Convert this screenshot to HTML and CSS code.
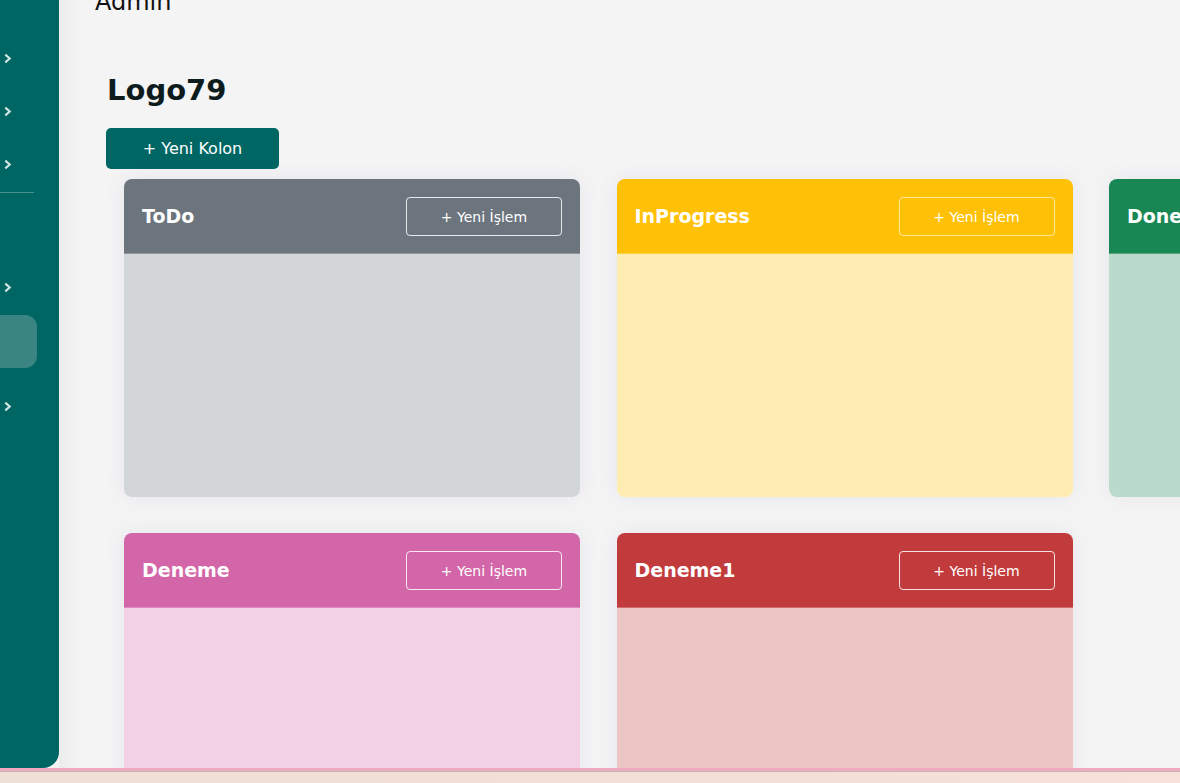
FILE: index.html
```html
<!DOCTYPE html>
<html lang="tr">
<head>
<meta charset="utf-8">
<title>Logo79</title>
<link rel="stylesheet" href="styles.css">
</head>
<body>
<div class="app">
  <aside class="sidebar">
    <div class="nav-item"><svg class="chev" viewBox="0 0 8 10"><path d="M2 1.5 L6 5 L2 8.5"/></svg></div>
    <div class="nav-item"><svg class="chev" viewBox="0 0 8 10"><path d="M2 1.5 L6 5 L2 8.5"/></svg></div>
    <div class="nav-item"><svg class="chev" viewBox="0 0 8 10"><path d="M2 1.5 L6 5 L2 8.5"/></svg></div>
    <div class="nav-sep"></div>
    <div class="nav-item nav-blank"></div>
    <div class="nav-item"><svg class="chev" viewBox="0 0 8 10"><path d="M2 1.5 L6 5 L2 8.5"/></svg></div>
    <div class="nav-active"></div>
    <div class="nav-item"><svg class="chev" viewBox="0 0 8 10"><path d="M2 1.5 L6 5 L2 8.5"/></svg></div>
  </aside>
  <main class="main">
    <div class="topbar">Admin</div>
    <h1 class="title">Logo79</h1>
    <button class="btn-col">+ Yeni Kolon</button>
    <div class="board">
      <section class="col c-gray">
        <header class="col-head"><span class="col-title">ToDo</span><button class="btn-task">+ Yeni İşlem</button></header>
        <div class="col-body"></div>
      </section>
      <section class="col c-yellow">
        <header class="col-head"><span class="col-title">InProgress</span><button class="btn-task">+ Yeni İşlem</button></header>
        <div class="col-body"></div>
      </section>
      <section class="col c-green">
        <header class="col-head"><span class="col-title">Done</span><button class="btn-task">+ Yeni İşlem</button></header>
        <div class="col-body"></div>
      </section>
      <section class="col c-pink">
        <header class="col-head"><span class="col-title">Deneme</span><button class="btn-task">+ Yeni İşlem</button></header>
        <div class="col-body"></div>
      </section>
      <section class="col c-red">
        <header class="col-head"><span class="col-title">Deneme1</span><button class="btn-task">+ Yeni İşlem</button></header>
        <div class="col-body"></div>
      </section>
    </div>
  </main>
</div>
<div class="footer-strip"></div>
</body>
</html>
```

FILE: styles.css
```css
* { box-sizing: border-box; }
html, body { margin: 0; padding: 0; }
body {
  width: 1180px;
  height: 783px;
  overflow: hidden;
  background: #f4f4f5;
  font-family: "DejaVu Sans", "Open Sans", sans-serif;
}
.app {
  display: flex;
  height: 768px;
  overflow: hidden;
}
.sidebar {
  flex: 0 0 59px;
  height: 768px;
  background: #006663;
  border-bottom-right-radius: 16px;
  padding-top: 32px;
  display: flex;
  flex-direction: column;
  position: relative;
  z-index: 2;
}
.nav-item {
  height: 53px;
  display: flex;
  align-items: center;
  padding-left: 3px;
}
.nav-blank { height: 68px; }
.chev {
  width: 9px;
  height: 11px;
  fill: none;
  stroke: #cfe3e1;
  stroke-width: 2;
}
.nav-sep {
  height: 1px;
  width: 34px;
  background: #4a8f8c;
  margin-top: 1px;
}
.nav-active {
  width: 37px;
  height: 53px;
  background: #3a8482;
  border-radius: 0 12px 12px 0;
  margin: 1px 0 12px;
}
.main {
  flex: 1;
  min-width: 0;
  height: 768px;
  background: linear-gradient(to right, #ececed 0, #f2f2f3 14px, #f4f4f5 24px);
  padding-left: 36px;
  overflow: hidden;
}
.topbar {
  font-size: 24px;
  color: #111;
  line-height: 30px;
  margin-top: -13px;
  height: 30px;
}
.title {
  margin: 55px 0 0 12px;
  font-size: 29px;
  line-height: 36px;
  font-weight: bold;
  color: #0e1b1d;
}
.btn-col {
  margin: 20px 0 0 11px;
  width: 173px;
  height: 41px;
  border: 0;
  border-radius: 5px;
  background: #006663;
  color: #fff;
  font-family: inherit;
  font-size: 16px;
  display: block;
}
.board {
  display: grid;
  grid-template-columns: repeat(3, 456px);
  gap: 36px 36.5px;
  margin: 10px 0 0 29px;
  width: 1442px;
}
.col {
  height: 318px;
  border-radius: 8px;
  overflow: hidden;
  box-shadow: 0 0 20px rgba(120, 120, 160, 0.10);
  display: flex;
  flex-direction: column;
}
.col-head {
  height: 75px;
  flex: 0 0 75px;
  display: flex;
  align-items: center;
  justify-content: space-between;
  padding: 0 18px;
  border-bottom: 1px solid rgba(255,255,255,0.25);
}
.col-title {
  color: #fff;
  font-weight: bold;
  font-size: 19px;
}
.btn-task {
  width: 156px;
  height: 39px;
  background: transparent;
  border: 1px solid rgba(255,255,255,0.85);
  border-radius: 4px;
  color: #fff;
  font-family: inherit;
  font-size: 14px;
  margin-top: 1px;
}
.col-body { flex: 1; }
.c-gray .col-head { background: #6c757d; }
.c-gray .col-body { background: #d2d6d9; }
.c-yellow .col-head { background: #ffc107; }
.c-yellow .col-body { background: #ffecb3; }
.c-yellow .btn-task { border-color: rgba(255,255,255,0.6); }
.c-green .col-head { background: #198754; }
.c-green .col-body { background: #badbcc; }
.c-pink .col-head { background: #d366a8; }
.c-pink .col-body { background: #f2d1e5; }
.c-red .col-head { background: #c23b3c; }
.c-red .col-body { background: #ecc5c5; }
.footer-strip {
  height: 15px;
  background: linear-gradient(to right, #efe0d6, #f3dfd6 60%, #f7e1d8);
  border-top: 3px solid #eeaac0;
  box-shadow: inset 0 1px 0 #c9b3b8;
}
```
